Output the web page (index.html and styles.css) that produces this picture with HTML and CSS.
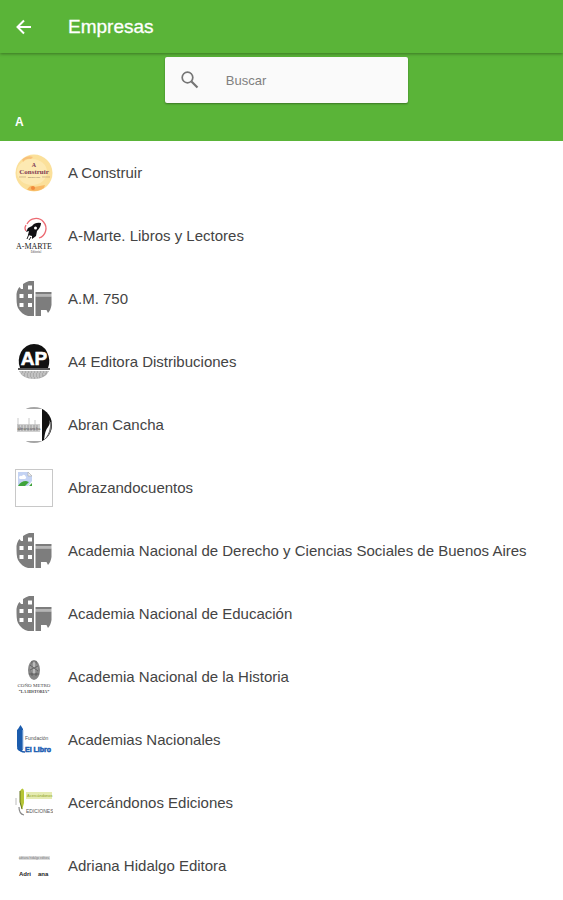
FILE: index.html
```html
<!DOCTYPE html>
<html lang="es">
<head>
<meta charset="utf-8">
<meta name="viewport" content="width=device-width, initial-scale=1">
<title>Empresas</title>
<link rel="stylesheet" href="styles.css">
</head>
<body>
<svg class="defs" aria-hidden="true">
  <defs>
    <clipPath id="round"><circle cx="19" cy="19" r="18"/></clipPath>
    <symbol id="building" viewBox="0 0 38 38">
      <path fill="#7d7d7d" fill-rule="evenodd" d="M14 1H19V36H13C9 35 5 32 3 28C1.500 25 1.500 20 1.500 14C2 11 3 8.500 4.500 7L6 9H8V4C10 2.500 12 1.500 14 1ZM13 5.500V9.500H17V5.500ZM4.500 14V18H8.500V14ZM13 14V18H17V14ZM4.500 23V27H8.500V23ZM13 23V27H17V23Z"/>
      <path fill="#7d7d7d" d="M20.500 12H36.500V14H20.500Z"/>
      <path fill="#b5b5b5" d="M20.500 14H36.500V16.500H20.500Z"/>
      <path fill="#7d7d7d" d="M20.500 16.500H36.500V25C36 28 35 31 33 33L31.500 30H26V36H20.500Z"/>
    </symbol>
  </defs>
</svg>

<header class="toolbar">
  <button class="back" type="button" aria-label="Volver">
    <svg width="24" height="24" viewBox="0 0 24 24"><path d="M19 12H6M12 5.500L5.500 12L12 18.500" fill="none" stroke="#fff" stroke-width="2"/></svg>
  </button>
  <h1 class="title">Empresas</h1>
</header>

<main>
  <div class="search-area">
    <label class="search">
      <svg class="search-icon" width="24" height="24" viewBox="0 0 24 24" aria-hidden="true"><circle cx="9.500" cy="9.500" r="5.300" fill="none" stroke="#757575" stroke-width="1.700"/><path d="M13.500 13.500L19.500 19.500" stroke="#757575" stroke-width="2.200"/></svg>
      <input class="search-input" type="text" placeholder="Buscar" aria-label="Buscar">
    </label>
  </div>
  <h2 class="letter">A</h2>

  <ul class="companies">
    <li class="company">
      <svg class="logo" viewBox="0 0 38 38" aria-hidden="true">
        <circle cx="19" cy="19" r="18.500" fill="#fbe09a"/>
        <g clip-path="url(#round)">
          <ellipse cx="17" cy="18" rx="15" ry="13" fill="#fde9b2"/>
          <path d="M7 5Q12 1 18 3L16 5Q11 4 8 8Z" fill="#f8c07a"/>
          <path d="M12 36Q15 30 19 33Q25 32 30 31L28 37H13Z" fill="#f8b864"/>
          <circle cx="18" cy="34" r="2" fill="#f18a3b"/>
        </g>
        <text class="serif bold" x="19" y="13" font-size="6" text-anchor="middle" fill="#7c3853">A</text>
        <text class="serif bold" x="19" y="20" font-size="7" text-anchor="middle" fill="#7c3853">Construir</text>
        <path d="M4 23H11M27 23H35" stroke="#c2a77a" stroke-width=".7"/>
        <text class="sans" x="19" y="24" font-size="2" text-anchor="middle" fill="#806851">Espacio Libro</text>
      </svg>
      <span class="name">A Construir</span>
    </li>
    <li class="company">
      <svg class="logo" viewBox="0 0 38 38" aria-hidden="true">
        <path d="M12 7A10 10 0 1 1 24 21M11 8Q9 11 11 14" fill="none" stroke="#ec6a72" stroke-width="1.300"/>
        <path d="M26 6Q20 5 17 9L13 11L11 15L14 14L13 18L17 19L17 22L21 19L22 14Q26 10 26 6Z" fill="#101014"/>
        <circle cx="20.500" cy="11" r="1.500" fill="#fff"/>
        <path d="M14 17L12 22M16 20L14 23" stroke="#222" stroke-width="1"/>
        <text class="serif" x="19" y="32" font-size="8" text-anchor="middle" fill="#222">A-MARTE</text>
        <text class="serif" x="21" y="36" font-size="3" text-anchor="middle" fill="#444">Editorial</text>
      </svg>
      <span class="name">A-Marte. Libros y Lectores</span>
    </li>
    <li class="company">
      <svg class="logo" aria-hidden="true"><use href="#building"/></svg>
      <span class="name">A.M. 750</span>
    </li>
    <li class="company">
      <svg class="logo" viewBox="0 0 38 38" aria-hidden="true">
        <path d="M5 25Q2 17 6 9Q11 1 19 1Q28 1 32 9Q36 17 33 25Z" fill="#111"/>
        <text class="sans bold" x="19" y="22" font-size="19" text-anchor="middle" fill="#fff" stroke="#fff" stroke-width=".6">AP</text>
        <path d="M3 26H35" stroke="#555" stroke-width="2"/>
        <path d="M4 28H34Q30 36 19 36Q8 36 4 28Z" fill="#aaa"/>
        <path d="M5 29H33M7 31H31M10 33H28M14 35H24" stroke="#e5e5e5" stroke-width=".8" stroke-dasharray="2 1"/>
      </svg>
      <span class="name">A4 Editora Distribuciones</span>
    </li>
    <li class="company">
      <svg class="logo" viewBox="0 0 38 38" aria-hidden="true">
        <g clip-path="url(#round)">
          <path d="M8 1H29V3H8ZM8 35H29V37H8Z" fill="#a5a5a5"/>
          <path d="M27 1H38V37H27Z" fill="#111"/>
          <path d="M34 12Q36 17 33 21Q30 24 29 34Q35 28 36 19Z" fill="#fff"/>
          <path d="M31 33Q36 27 36 16" fill="none" stroke="#777" stroke-width="1.500"/>
        </g>
        <path d="M2 18H25V26H2Z" fill="#d0d0d0"/>
        <path d="M3 12V25M14 12V25M20 14V25" stroke="#bbb" stroke-width=".8"/>
        <path d="M4 19V25M7 19V25M10 19V25M13 19V25M16 19V25M19 19V25M22 19V25" stroke="#999"/>
        <text class="sans" x="14" y="24" font-size="4" text-anchor="middle" fill="#555">abrancancha</text>
      </svg>
      <span class="name">Abran Cancha</span>
    </li>
    <li class="company">
      <svg class="logo" viewBox="0 0 38 38" aria-hidden="true">
        <rect x=".5" y=".5" width="37" height="37" fill="#fff" stroke="#c8c8c8"/>
        <path d="M3 3H13L17 7V12L13 17H3Z" fill="#c4d3f3"/>
        <path d="M4 9Q4 6 7 7Q9 4 11 8Q12 9 10 10H5Z" fill="#fff"/>
        <path d="M13 3V7H17Z" fill="#f4f4f4" stroke="#aaa" stroke-width=".6"/>
        <path d="M3 17Q6 12 11 12L14 13L10 17ZM14 17L17 14V17Z" fill="#3fa33b"/>
      </svg>
      <span class="name">Abrazandocuentos</span>
    </li>
    <li class="company">
      <svg class="logo" aria-hidden="true"><use href="#building"/></svg>
      <span class="name">Academia Nacional de Derecho y Ciencias Sociales de Buenos Aires</span>
    </li>
    <li class="company">
      <svg class="logo" aria-hidden="true"><use href="#building"/></svg>
      <span class="name">Academia Nacional de Educación</span>
    </li>
    <li class="company">
      <svg class="logo" viewBox="0 0 38 38" aria-hidden="true">
        <ellipse cx="19" cy="12" rx="6" ry="10" fill="#858585"/>
        <ellipse cx="19" cy="10" rx="3.500" ry="6" fill="#bbb"/>
        <path d="M15 7L23 13M15 12L23 8M14 16H24M17 3V18M21 3V18" stroke="#555" stroke-width=".8"/>
        <text class="serif" x="19" y="29" font-size="5" text-anchor="middle" fill="#444">COÑO METRO</text>
        <text class="serif bold" x="19" y="35" font-size="4" text-anchor="middle" fill="#444">“LA HISTORIA”</text>
      </svg>
      <span class="name">Academia Nacional de la Historia</span>
    </li>
    <li class="company">
      <svg class="logo" viewBox="0 0 38 38" aria-hidden="true">
        <path d="M3 8L5.500 4L8 8V28Q7 32 3 29Q2 28 2 25V9Z" fill="#1b5cad"/>
        <path d="M3 27Q5 31 10 31" fill="none" stroke="#1b5cad" stroke-width="1.500"/>
        <path d="M8 9V28" stroke="#a9c5e6" stroke-width="1"/>
        <text class="sans" x="10" y="19" font-size="5" fill="#555">Fundación</text>
        <text class="sans bold" x="10" y="31" font-size="7" fill="#1c5eb0" stroke="#1c5eb0" stroke-width=".5">El Libro</text>
      </svg>
      <span class="name">Academias Nacionales</span>
    </li>
    <li class="company">
      <svg class="logo" viewBox="0 0 38 38" aria-hidden="true">
        <path d="M5 7Q8 2 9 7V19L7 26L5 18Z" fill="#b5c535"/>
        <path d="M5 7V18L7 25" fill="none" stroke="#66751f" stroke-width="1"/>
        <path d="M1 14V21" stroke="#aaa" stroke-width=".8"/>
        <path d="M4 23Q4 30 9 31" fill="none" stroke="#888" stroke-width="1.200"/>
        <path d="M11 8H37V15H11Z" fill="#e5ebb1"/>
        <text class="sans" x="12" y="13" font-size="4" fill="#8ea51e">Acercándonos</text>
        <text class="sans" x="11" y="29" font-size="5" fill="#555">EDICIONES</text>
      </svg>
      <span class="name">Acercándonos Ediciones</span>
    </li>
    <li class="company">
      <svg class="logo" viewBox="0 0 38 38" aria-hidden="true">
        <path d="M4 9H35V13H4Z" fill="#dcdcdc"/>
        <text class="sans" x="19" y="12" font-size="3" text-anchor="middle" fill="#777">adriana hidalgo editora</text>
        <text class="sans bold" x="4" y="29" font-size="6" fill="#222">Adri</text>
        <text class="sans bold" x="23" y="29" font-size="6" fill="#222">ana</text>
      </svg>
      <span class="name">Adriana Hidalgo Editora</span>
    </li>
  </ul>
</main>
</body>
</html>
```

FILE: styles.css
```css
* { box-sizing: border-box; }

body {
  margin: 0;
  background: #fff;
  color: #444;
  font-family: "Liberation Sans", Arial, sans-serif;
}

.defs { display: block; width: 0; height: 0; }

.toolbar {
  display: flex;
  align-items: center;
  gap: 32px;
  height: 53px;
  padding: 0 12px;
  background: #5ab438;
  color: #fff;
  box-shadow: 0 1px 3px rgba(0, 0, 0, .35);
  position: relative;
}

.back {
  display: flex;
  padding: 0;
  border: 0;
  background: none;
}

.back svg { width: 24px; height: 24px; }

.title {
  margin: 0;
  font-size: 19px;
  font-weight: 400;
  line-height: 24px;
  -webkit-text-stroke: 0.3px #fff;
}

.search-area {
  display: flex;
  justify-content: center;
  padding: 4px 0 0 10px;
  background: #5ab438;
}

.search {
  display: flex;
  align-items: center;
  gap: 24px;
  width: 44%;
  height: 46px;
  padding: 0 13px;
  border-radius: 2px;
  background: #fafafa;
  box-shadow: 0 1px 2px rgba(0, 0, 0, .35);
}

.search-icon { flex: none; }

.search-input {
  flex: 1;
  min-width: 0;
  padding: 0;
  border: 0;
  outline: 0;
  background: none;
  color: #333;
  font-family: inherit;
  font-size: 13px;
}

.search-input::placeholder { color: #808080; opacity: 1; }

.letter {
  margin: 0;
  padding: 9px 15px;
  background: #5ab438;
  color: #fff;
  font-size: 12px;
  font-weight: 700;
  line-height: 20px;
}

.companies {
  margin: 0;
  padding: 0;
  list-style: none;
}

.company {
  display: flex;
  align-items: center;
  gap: 15px;
  min-height: 63px;
  padding: 0 15px;
}

.logo { flex: none; width: 38px; height: 38px; }

.name { font-size: 15px; line-height: 20px; }

.sans { font-family: "Liberation Sans", sans-serif; }
.serif { font-family: "Liberation Serif", serif; }
.bold { font-weight: 700; }
```
